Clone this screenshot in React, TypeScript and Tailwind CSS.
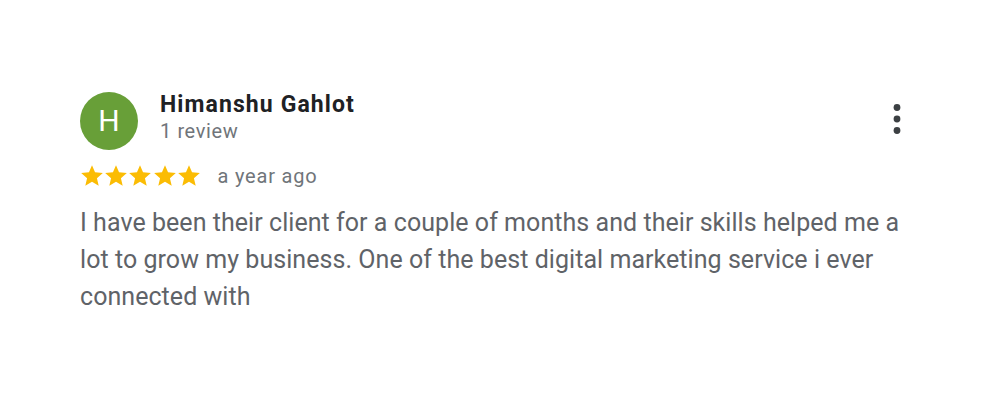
function Star() {
  return (
    <svg viewBox="0 0 24 24" className="w-[26px] h-[26px] -mr-[1.6px]" aria-hidden="true">
      <path
        fill="#fbbc04"
        d="M12 17.27L18.18 21l-1.64-7.03L22 9.24l-7.19-.61L12 2 9.19 8.63 2 9.24l5.46 4.73L5.82 21z"
      />
    </svg>
  );
}

function MoreDots() {
  return (
    <svg viewBox="0 0 10 34" className="w-[10px] h-[34px]" aria-hidden="true">
      <circle cx="5" cy="5.5" r="3.4" fill="#3c4043" />
      <circle cx="5" cy="17" r="3.4" fill="#3c4043" />
      <circle cx="5" cy="28.5" r="3.4" fill="#3c4043" />
    </svg>
  );
}

export default function App() {
  return (
    <div className="w-[1000px] h-[400px] bg-white font-['Roboto',sans-serif]">
      <div className="pt-[92px] pl-[80px] pr-[98px]">
        {/* Header */}
        <div className="flex items-start">
          <div className="w-[58px] h-[58px] shrink-0 rounded-full bg-[#689f38] flex items-center justify-center text-white text-[30px] leading-none">
            H
          </div>
          <div className="ml-[22px] -mt-[1px] flex-1">
            <div className="text-[23px] leading-[28px] font-bold tracking-[1.1px] text-[#202124]">
              Himanshu Gahlot
            </div>
            <div className="text-[20px] leading-[24px] tracking-[0.6px] text-[#70757a]">1 review</div>
          </div>
          <div className="mt-[10px]">
            <MoreDots />
          </div>
        </div>

        {/* Rating */}
        <div className="flex items-center mt-[13px]">
          <div className="flex -ml-[1.5px]">
            {[0, 1, 2, 3, 4].map((i) => (
              <Star key={i} />
            ))}
          </div>
          <span className="ml-[17px] text-[20px] leading-[24px] tracking-[0.8px] text-[#70757a]">
            a year ago
          </span>
        </div>

        {/* Body */}
        <p className="mt-[15px] max-w-[850px] text-[25px] leading-[37px] tracking-[0.05px] text-[#5f6368]">
          I have been their client for a couple of months and their skills helped me a lot to grow my
          business. One of the best digital marketing service i ever connected with
        </p>
      </div>
    </div>
  );
}
